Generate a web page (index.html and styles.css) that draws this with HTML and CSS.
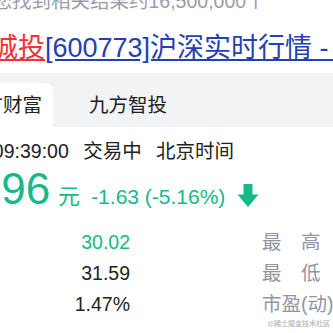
FILE: index.html
```html
<!DOCTYPE html>
<html lang="zh-CN">
<head>
    <meta charset="UTF-8">
    <meta name="viewport" content="width=device-width, initial-scale=1.0">
    <title>西藏城投 行情</title>
    <link rel="stylesheet" href="styles.css">
</head>
<body>
    <div class="page">
        <!-- Contagem de resultados -->
        <div class="result-count">百度为您找到相关结果约16,500,000个</div>

        <h3 class="title"><a href="#"><em>西藏城投</em>[600773]沪深实时行情 - 百度股市通</a></h3>

        <div class="card">
            <!-- Abas das fontes -->
            <div class="tabs">
                <div class="tab active">东方财富</div>
                <div class="tab">九方智投</div>
            </div>

            <div class="quote">
                <div class="status">
                    <span>11-23 09:39:00</span>
                    <span class="sep">交易中</span>
                    <span class="sep">北京时间</span>
                </div>

                <div class="price-row">
                    <span class="price">29.96</span>
                    <span class="unit">元</span>
                    <span class="change">-1.63 (-5.16%)</span>
                    <svg class="arrow" width="22" height="23" viewBox="0 0 22 23">
                        <path d="M6.5 0 H15.5 V10.5 H21.5 L11 23 L0.5 10.5 H6.5 Z" fill="#16b98a"/>
                    </svg>
                </div>

                <div class="stats">
                    <div class="stat-row">
                        <span class="lbl">今　开</span>
                        <span class="val down">30.02</span>
                        <span class="lbl lbl-r">最　高</span>
                        <span class="val-r">30.30</span>
                    </div>
                    <div class="stat-row">
                        <span class="lbl">昨　收</span>
                        <span class="val">31.59</span>
                        <span class="lbl lbl-r">最　低</span>
                        <span class="val-r">29.80</span>
                    </div>
                    <div class="stat-row">
                        <span class="lbl">换手率</span>
                        <span class="val">1.47%</span>
                        <span class="lbl lbl-r">市盈(动)</span>
                        <span class="val-r">45.12</span>
                    </div>
                </div>

                <div class="actions">
                    <div class="action"></div>
                    <div class="action"></div>
                    <div class="action wide"></div>
                </div>
            </div>
        </div>
    </div>

    <div class="watermark">@稀土掘金技术社区</div>
</body>
</html>
```

FILE: styles.css
```css
/* Base */
body {
    margin: 0;
    background-color: #ffffff;
    color: #222222;
    font-family: "Liberation Sans", "Noto Sans CJK SC", sans-serif;
    overflow: hidden;
    white-space: nowrap;
}

.page {
    width: 333px;
    height: 333px;
    overflow: hidden;
}

/* Linha de resultados */
.result-count {
    margin: -14px 0 0 -66px;
    font-size: 19.5px;
    line-height: 30px;
    color: #9a9da8;
}

/* Titulo */
.title {
    margin: 14px 0 0 -63px;
    font-size: 27px;
    font-weight: normal;
    line-height: 36px;
}

.title a {
    color: #2440b3;
    text-decoration: underline;
}

.title em {
    font-style: normal;
    color: #f73131;
    text-decoration: underline;
}

/* Abas */
.card {
    margin-top: 7px;
}

.tabs {
    display: flex;
    gap: 25px;
    height: 54px;
    padding-top: 10px;
    box-sizing: border-box;
    background-color: #f1f3f5;
}

.tab {
    flex-shrink: 0;
    padding: 0 11px;
    font-size: 19.5px;
    line-height: 44px;
    color: #222222;
}

.tab.active {
    margin-left: -47px;
    background-color: #ffffff;
    border-radius: 8px 8px 0 0;
}

/* Cotacao */
.quote {
    margin-left: -61px;
}

.status {
    padding-top: 9px;
    font-size: 19.5px;
    line-height: 30px;
    color: #222222;
}

.status .sep {
    margin-left: 9px;
}

.price-row {
    display: flex;
    align-items: baseline;
    margin-left: 1px;
    line-height: 46px;
    color: #16b98a;
}

.price {
    font-size: 44px;
}

.unit {
    margin-left: 8px;
    font-size: 22px;
}

.change {
    margin-left: 11px;
    font-size: 21px;
}

.arrow {
    align-self: center;
    margin-left: 12px;
    margin-top: 5px;
}

/* Tabela de dados */
.stats {
    margin: 7px 0 0 -19px;
}

.stat-row {
    display: flex;
    font-size: 19.5px;
    line-height: 31px;
}

.stat-row span {
    flex-shrink: 0;
}

.lbl {
    width: 70px;
    color: #9195a3;
}

.val {
    width: 140px;
    text-align: right;
    color: #222222;
}

.val.down {
    color: #16b98a;
}

.lbl-r {
    width: 90px;
    margin-left: 132px;
}

.val-r {
    color: #222222;
}

/* Botoes */
.actions {
    display: flex;
    gap: 14px;
    margin-top: 17px;
}

.action {
    flex-shrink: 0;
    width: 118px;
    height: 36px;
    border-radius: 8px;
    background-color: #f2f3f5;
}

.action.wide {
    width: 150px;
}

/* Marca d'agua */
.watermark {
    position: absolute;
    right: 3px;
    bottom: 5px;
    font-size: 7px;
    font-weight: bold;
    color: #c3c3c3;
}
```
